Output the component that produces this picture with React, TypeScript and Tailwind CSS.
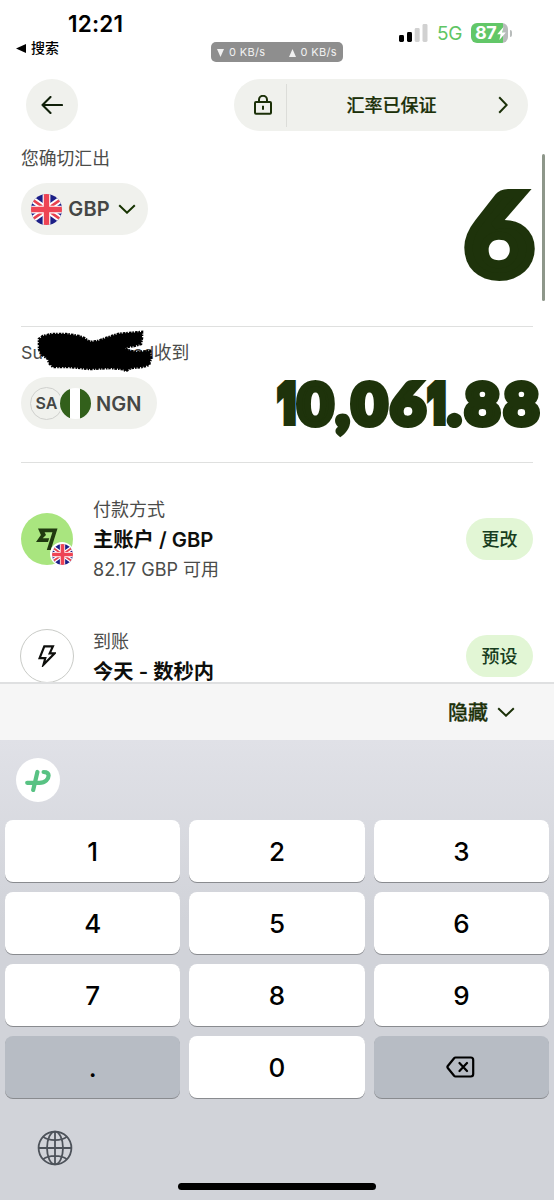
import type { ReactNode } from "react";

const GLYPH_STYLES: Record<string, string> = {
  "0": "w-[39px] font-['Lato',sans-serif] scale-x-105",
  "1": "w-[19px] font-['Inter',sans-serif] text-[55px] scale-x-[0.72]",
  "6": "w-[38px] font-['Lato',sans-serif] scale-x-105",
  "8": "w-[39px] font-['Lato',sans-serif] scale-x-105",
  ",": "w-[15px] font-['Lato',sans-serif]",
  ".": "w-[17px] font-['Lato',sans-serif]",
};

const KEYS = ["1", "2", "3", "4", "5", "6", "7", "8", "9", ".", "0", "delete"];

function UkFlag({ className }: { className: string }) {
  return (
    <svg viewBox="0 0 32 32" className={className}>
      <clipPath id="flagRound">
        <circle cx="16" cy="16" r="16" />
      </clipPath>
      <g clipPath="url(#flagRound)">
        <path d="M0 0h32v32H0z" fill="#1c1f87" />
        <path d="M-4 2 36 30M36 2-4 30" stroke="#fff" strokeWidth="6.5" />
        <path d="M-4 2 36 30M36 2-4 30" stroke="#e8424f" strokeWidth="2.6" />
        <path d="M16 0v32M0 16h32" stroke="#fff" strokeWidth="8" />
        <path d="M16 0v32M0 16h32" stroke="#ee4454" strokeWidth="5.6" />
      </g>
    </svg>
  );
}

function Chevron({ className }: { className: string }) {
  return (
    <svg viewBox="0 0 18 10" className={className} fill="none" stroke="currentColor" strokeWidth="2">
      <path d="m1.2 1.2 7.8 7.5 7.8-7.5" />
    </svg>
  );
}

function StatusBar() {
  return (
    <div className="flex h-[79px] shrink-0 items-start justify-between">
      <div className="w-[211px] pt-2.5">
        <div className="pl-[68px] text-[22.5px] leading-[28px] font-semibold tracking-[0.2px] text-black">12:21</div>
        <div className="flex items-center gap-[5px] pl-4 text-[14px] leading-5 font-medium text-black">
          <svg viewBox="0 0 10 9" className="h-[9px] w-2.5">
            <path d="M0 4.5 10 0v9z" />
          </svg>
          搜索
        </div>
      </div>
      <div className="mt-[42px] flex h-5 w-[132px] items-center justify-between rounded-[5px] bg-[#8e8e8e] px-1.5 pt-px font-['Inter',sans-serif] text-[11px] tracking-[0.35px] text-[#f1f1f1]">
        <span className="flex items-center gap-[5px]">
          <svg viewBox="0 0 7 8" className="h-2 w-[7px]" fill="currentColor"><path d="M0 0h7L3.5 8z" /></svg>
          0 KB/s
        </span>
        <span className="flex items-center gap-[5px]">
          <svg viewBox="0 0 7 8" className="h-2 w-[7px]" fill="currentColor"><path d="M0 8h7L3.5 0z" /></svg>
          0 KB/s
        </span>
      </div>
      <div className="mt-[22px] flex w-[211px] items-center pl-[56px]">
        <svg viewBox="0 0 29 18" className="h-[18px] w-[29px]">
          <rect y="11" width="5" height="7" rx="1.4" />
          <rect x="8" y="8" width="5" height="10" rx="1.4" />
          <rect x="15.7" y="4" width="5" height="14" rx="1.4" fill="#d1d1d1" />
          <rect x="23.5" width="5" height="18" rx="1.4" fill="#d1d1d1" />
        </svg>
        <span className="ml-[9px] w-[25px] pt-0.5 text-[19px] leading-5 tracking-[-0.3px] text-[#5fc565]">5G</span>
        <span className="ml-[9px] flex h-5 w-[37px] items-center rounded-[6px] bg-[linear-gradient(90deg,#62c768_0_32px,#b8bcbb_32px)] pl-[4px] text-[18px] leading-5 font-bold tracking-[-0.5px] text-white">
          87
          <svg viewBox="0 0 8 12" className="ml-px h-[13px] w-[9px]" fill="currentColor"><path d="M5.8 0 0 6.8h3.2L2 12l6-7H4.7z" /></svg>
        </span>
        <span className="ml-0.5 h-[7px] w-[2px] rounded-r-full bg-[#b8bcbb]" />
      </div>
    </div>
  );
}

function Header() {
  return (
    <div className="flex h-[52px] shrink-0 justify-between px-[26px]">
      <button className="flex size-[52px] items-center justify-center rounded-full bg-[#f0f1ed]">
        <svg viewBox="0 0 22 18" className="h-[18px] w-[22px]" fill="none" stroke="#10200a" strokeWidth="2.1" strokeLinecap="round" strokeLinejoin="round">
          <path d="M21 9H1.5M9.5 1 1.5 9l8 8" />
        </svg>
      </button>
      <button className="flex w-[294px] items-center rounded-full bg-[#f0f1ed] text-[#1b3008]">
        <svg viewBox="0 0 18 20" className="ml-[20px] h-5 w-[18px]" fill="none" stroke="currentColor" strokeWidth="2">
          <rect x="1" y="7" width="16" height="11.7" rx="1" />
          <path d="M5 7V4.8a4 4 0 0 1 8 0V7M9 10.7v4" />
        </svg>
        <span className="ml-[14px] h-[43px] w-px bg-[#dcddd9]" />
        <span className="flex-1 pt-px pr-0.5 text-center text-[18px] font-medium [-webkit-text-stroke:0.2px_#1b3008]">汇率已保证</span>
        <svg viewBox="0 0 10 18" className="mr-[20px] h-[18px] w-2.5" fill="none" stroke="currentColor" strokeWidth="2">
          <path d="m1.2 1.2 7.5 7.8-7.5 7.8" />
        </svg>
      </button>
    </div>
  );
}

// Marker strokes hiding the middle of the recipient's name
function Scribble() {
  return (
    <svg viewBox="0 0 118 44" className="absolute -top-[10px] left-[15px] h-[44px] w-[118px]">
      <path
        fill="#000"
        stroke="#000"
        strokeWidth="2.6"
        strokeDasharray="1.6 1.1 2.6 0.8"
        d="M3 9 7 6 16 4 30 4 43 6 48 8 54 12 62 11 70 8 82 4 92 3 106 2 106 8 105 14 98 16 91 17 89 19 94 21 102 22 114 21 115 28 113 35 106 37 95 38 90 41 86 39 74 38 54 39 34 37 17 37 13 33 12 29 5 24 3 19z"
      />
    </svg>
  );
}

function Amounts() {
  return (
    <>
      <section className="mx-[21px] flex h-[196px] shrink-0 justify-between border-b border-[#dfe0df]">
        <div className="pt-[15px]">
          <div className="text-[17.8px] leading-[26px] text-[#4b4c4a]">您确切汇出</div>
          <button className="mt-[11px] flex h-[52px] w-[127px] items-center rounded-full bg-[#f0f1ed] pl-2.5 text-[20px] font-semibold text-[#454745]">
            <UkFlag className="size-[31px]" />
            <span className="ml-[5px] w-[44px] tracking-[0.1px]">GBP</span>
            <Chevron className="ml-[7px] h-2.5 w-[18px] text-[#163300]" />
          </button>
        </div>
        <div className="-mr-[12px] flex pt-[23px]">
          <div className="mt-[12px] mr-[5px] flex w-[76px] scale-x-105 justify-center font-['Lato',sans-serif] text-[115px] leading-[130px] font-black text-[#1e330b] [-webkit-text-stroke:8px_#1e330b]">6</div>
          <div className="h-[147px] w-[3px] rounded-full bg-[#8e978a]" />
        </div>
      </section>
      <section className="mx-[21px] flex h-[136px] shrink-0 justify-between border-b border-[#dfe0df]">
        <div className="pt-[13px]">
          <div className="relative flex h-[26px] w-[174px] justify-between text-[17.8px] leading-[26px] text-[#4b4c4a]">
            <span>Su</span>
            <span className="pr-[6px] tracking-[-0.2px]">ood收到</span>
            <Scribble />
          </div>
          <button className="mt-[11px] flex h-[52px] w-[136px] items-center rounded-full bg-[#f0f1ed] pl-[9px] font-semibold text-[#454745]">
            <span className="flex size-[33px] items-center justify-center rounded-full border border-[#cfd0cd] text-[16px]">SA</span>
            <span className="-ml-[5px] flex size-[35px] shrink-0 overflow-hidden rounded-full border-2 border-[#f0f1ed] bg-[linear-gradient(90deg,#32601b_0_33%,#fff_33%_66%,#32601b_66%)]" />
            <span className="ml-[3px] pt-px text-[20px]">NGN</span>
          </button>
        </div>
        <div className="-mr-[8px] flex h-[66px] w-[264px] justify-end pt-[43px] text-[58px] leading-[66px] font-black text-[#1e330b] [-webkit-text-stroke:6px_#1e330b]">
          {"10,061.88".split("").map((char, i) => (
            <span key={i} className={`flex h-[66px] shrink-0 justify-center leading-[66px] ${GLYPH_STYLES[char]}`}>{char}</span>
          ))}
        </div>
      </section>
    </>
  );
}

type RowProps = { icon: ReactNode; label: string; title: string; note?: string; action: string };

function DetailRow({ icon, label, title, note, action }: RowProps) {
  return (
    <div className="flex items-start">
      {icon}
      <div className={`ml-5 flex-1 ${note ? "-mt-4" : ""}`}>
        <div className="text-[18px] leading-[26px] text-[#4b4c4a]">{label}</div>
        <div className="mt-[2px] text-[20.3px] leading-[30px] font-semibold text-[#0e0f0c]">{title}</div>
        {note && <div className="mt-px text-[18px] leading-[28px] text-[#4b4c4a]">{note}</div>}
      </div>
      <button className={`h-[42px] w-[67px] rounded-full bg-[#e2f6d5] pt-px text-[18px] font-medium text-[#173c20] ${note ? "mt-[5px]" : "mt-1.5"}`}>{action}</button>
    </div>
  );
}

function Details() {
  return (
    <div className="h-[219px] shrink-0 overflow-hidden px-[21px] pt-[50px]">
      <div className="h-[116px]">
        <DetailRow
          label="付款方式"
          title="主账户 / GBP"
          note="82.17 GBP 可用"
          action="更改"
          icon={
            <div className="relative flex size-[52px] items-center justify-center rounded-full bg-[#a9e57f]">
              <svg viewBox="0 0 22 22" className="h-[22px] w-[22px]" fill="#203a10">
                <path d="M2 .5h19.5L14.8 22h-4l5.6-17.7H8.6L10 7 6.7 10.3h6.5L12 14H0L4.9 7z" />
              </svg>
              <span className="absolute -right-[1px] -bottom-px rounded-full bg-white p-[1.5px]">
                <UkFlag className="size-[21px]" />
              </span>
            </div>
          }
        />
      </div>
      <DetailRow
        label="到账"
        title="今天 - 数秒内"
        action="预设"
        icon={
          <div className="-mr-px -ml-px flex size-[54px] items-center justify-center rounded-full border border-[#c9cbc7]">
            <svg viewBox="0 0 18 22" className="h-[22px] w-[18px]" fill="none" stroke="#0e0f0c" strokeWidth="2.2">
              <path d="M6.3 1.4h8.6l-3.2 6.9h5L5.5 19.7l1.8-6.5H1.6z" />
            </svg>
          </div>
        }
      />
    </div>
  );
}

function Globe() {
  return (
    <svg viewBox="0 0 36 36" className="size-9" fill="none" stroke="#4d525a" strokeWidth="1.8">
      <circle cx="18" cy="18" r="16.4" />
      <ellipse cx="18" cy="18" rx="8" ry="16.4" />
      <path d="M18 1.6v32.8M1.6 18h32.8M6 6.6c6 4.7 18 4.7 24 0M6 29.4c6-4.7 18-4.7 24 0" />
    </svg>
  );
}

function Keyboard() {
  return (
    <div className="flex flex-1 flex-col bg-[linear-gradient(180deg,#e0e1e7_0,#d1d3d9_180px)]">
      <div className="h-[80px] pt-[18px] pl-4">
        <div className="flex size-[44px] items-center justify-center rounded-full bg-white">
          <svg viewBox="0 0 28 24" className="h-6 w-7" fill="none" stroke="#58c283" strokeWidth="4.2" strokeLinecap="round" strokeLinejoin="round">
            <path d="M13.4 4 9.2 22M3.2 14.8H15.5C21.5 14.8 24.6 11 24.6 7.6 24.6 5 23 4 19.6 4" />
          </svg>
        </div>
      </div>
      <div className="grid grid-cols-3 gap-x-[9px] gap-y-[10px] px-[5px]">
        {KEYS.map((key) => (
          <button
            key={key}
            className={`flex h-[62px] items-center justify-center rounded-[8px] text-[26px] font-medium text-black shadow-[0_1px_0_#898b8f] ${
              key === "." || key === "delete" ? "bg-[#b7bcc4]" : "bg-white"
            }`}
          >
            {key === "delete" ? (
              <svg viewBox="0 0 29 22" className="-ml-px h-[22px] w-[29px]" fill="none" stroke="#000" strokeWidth="2.2" strokeLinecap="round" strokeLinejoin="round">
                <path d="M9.5 1.5h15.3q2.4 0 2.4 2.4v14.2q0 2.4-2.4 2.4H9.5q-.8 0-1.4-.7L1.8 12q-.8-1 0-2l6.3-7.8q.6-.7 1.4-.7zM13.5 7l7.5 8M21 7l-7.5 8" />
              </svg>
            ) : (
              key
            )}
          </button>
        ))}
      </div>
      <div className="flex flex-1 flex-col justify-between pt-8 pb-2.5">
        <div className="pl-[37px]"><Globe /></div>
        <div className="mx-auto h-[7px] w-[198px] rounded-full bg-black" />
      </div>
    </div>
  );
}

export default function App() {
  return (
    <main className="flex h-[1200px] w-[554px] flex-col overflow-hidden bg-white font-['Inter','Noto_Sans_CJK_SC',sans-serif]">
      <StatusBar />
      <Header />
      <Amounts />
      <Details />
      <div className="flex h-[58px] shrink-0 items-center justify-end border-t-2 border-[#dfe0e1] bg-[#f6f6f6] pr-[39px] text-[20px] font-medium text-[#1b3008]">
        <span className="pt-0.5 [-webkit-text-stroke:0.3px_#1b3008]">隐藏</span>
        <Chevron className="ml-[9px] h-2.5 w-[18px]" />
      </div>
      <Keyboard />
    </main>
  );
}
